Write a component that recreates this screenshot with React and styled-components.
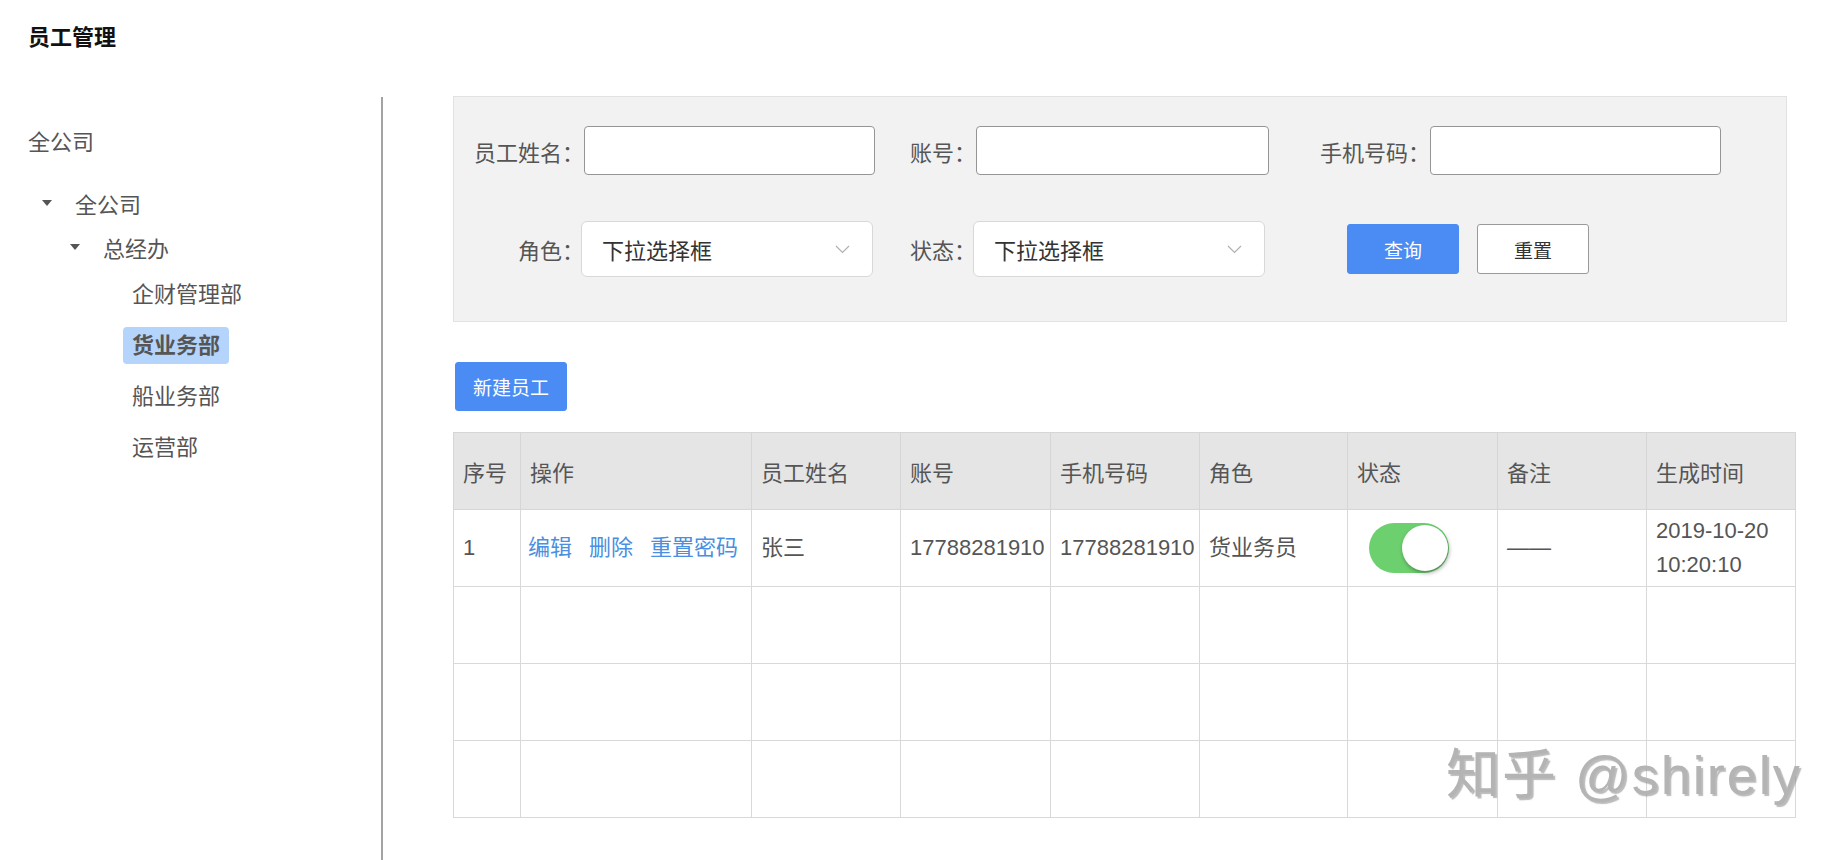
import React from 'react'
import styled, { createGlobalStyle } from 'styled-components'

const GlobalStyle = createGlobalStyle`
  body {
    margin: 0;
    background: #fff;
    font-family: "Liberation Sans", "Noto Sans CJK SC", sans-serif;
    color: #555;
  }
`

const Page = styled.div`
  position: relative;
  width: 1842px;
  height: 860px;
  overflow: hidden;
`

const Header = styled.div`
  height: 96px;
  box-sizing: border-box;
  padding: 26px 0 0 28px;
  font-size: 22px;
  line-height: 24px;
  font-weight: 700;
  color: #111;
`

const Body = styled.div`
  display: flex;
  height: 764px;
`

const Sidebar = styled.aside`
  width: 383px;
  flex-shrink: 0;
  margin-top: 1px;
  border-right: 2px solid #a3a3a3;
  padding-left: 28px;
  box-sizing: border-box;
  font-size: 22px;
`

const RootLabel = styled.div`
  padding-top: 31px;
  line-height: 30px;
  height: 53px;
  color: #555;
`

const TreeRow = styled.div`
  display: flex;
  align-items: center;
  height: ${p => p.$h}px;
  padding-left: ${p => p.$indent}px;
  color: #555;
`

const Caret = styled.span`
  width: 0;
  height: 0;
  border-left: 5px solid transparent;
  border-right: 5px solid transparent;
  border-top: 6px solid #555;
  margin-right: 23px;
`

const Leaf = styled.span`
  padding: 3px 9px;
  line-height: 31px;
  border-radius: 4px;
  background: ${p => (p.$active ? '#b5d4fb' : 'transparent')};
  font-weight: ${p => (p.$active ? 700 : 400)};
`

const Main = styled.main`
  flex: 1;
  padding-left: 70px;
`

const FilterPanel = styled.div`
  width: 1334px;
  height: 226px;
  box-sizing: border-box;
  background: #f2f2f2;
  border: 1px solid #e2e2e2;
  padding-top: 29px;
  display: grid;
  grid-template-columns: 130px 291px 101px 293px 161px 291px;
  grid-template-rows: 49px 56px;
  row-gap: 46px;
  align-items: center;
`

const Label = styled.label`
  text-align: right;
  font-size: 22px;
  color: #555;
  white-space: nowrap;
`

const TextInput = styled.input`
  box-sizing: border-box;
  width: 100%;
  height: 49px;
  border: 1px solid #959595;
  border-radius: 4px;
  background: #fff;
  outline: none;
`

const SelectBox = styled.div`
  box-sizing: border-box;
  width: 292px;
  margin-left: -3px;
  height: 56px;
  border: 1px solid #d8d8d8;
  border-radius: 6px;
  background: #fff;
  display: flex;
  align-items: center;
  justify-content: space-between;
  padding: 0 22px 0 20px;
  font-size: 22px;
  color: #333;
`

const ButtonCell = styled.div`
  grid-column: 5 / span 2;
  display: flex;
  gap: 18px;
  padding-left: 78px;
`

const Button = styled.button`
  width: 112px;
  height: ${p => p.$h || 50}px;
  box-sizing: border-box;
  border-radius: 3px;
  font-family: inherit;
  font-size: 19px;
  cursor: pointer;
  border: 1px solid ${p => (p.$primary ? '#4a8cf3' : '#9a9a9a')};
  background: ${p => (p.$primary ? '#4a8cf3' : '#fff')};
  color: ${p => (p.$primary ? '#fff' : '#333')};
`

const Toolbar = styled.div`
  padding: 40px 0 21px 2px;
`

const Table = styled.table`
  border-collapse: collapse;
  table-layout: fixed;
  width: 1342px;
  font-size: 22px;
  color: #555;
  border: 1px solid #cfcfcf;
`

const Th = styled.th`
  height: 76px;
  background: #e5e5e5;
  font-weight: 400;
  text-align: left;
  padding: 0 9px;
  border: 1px solid #d6d6d6;
`

const Td = styled.td`
  height: 76px;
  padding: 0 9px;
  border: 1px solid #d9d9d9;
  white-space: nowrap;
  line-height: 34px;
`

const Link = styled.a`
  color: #4a8fe0;
  margin-right: 17px;
  text-decoration: none;
  &:first-child { margin-left: -2px; }
  &:last-child { margin-right: 0; }
`

const Toggle = styled.div`
  width: 80px;
  height: 50px;
  margin-left: 12px;
  border-radius: 25px;
  background: #6dd06f;
  display: flex;
  align-items: center;
  justify-content: flex-end;
  padding: 0 1px;
  box-sizing: border-box;
`

const Knob = styled.div`
  width: 46px;
  height: 46px;
  border-radius: 50%;
  background: #fff;
  box-shadow: 1px 2px 4px rgba(0, 0, 0, 0.35);
`

const Watermark = styled.div`
  position: absolute;
  left: 1446px;
  top: 740px;
  font-size: 54px;
  line-height: 70px;
  letter-spacing: 2px;
  color: #b4b4b4;
  text-shadow: 2px 2px 1px rgba(120, 120, 120, 0.5);
  white-space: nowrap;
  pointer-events: none;
`

const Chevron = () => (
  <svg width="15" height="9" viewBox="0 0 15 9" fill="none">
    <path d="M1 1l6.5 6.5L14 1" stroke="#b0b0b0" strokeWidth="1.2" />
  </svg>
)

const columns = [67, 231, 149, 150, 149, 148, 150, 149, 149]
const heads = ['序号', '操作', '员工姓名', '账号', '手机号码', '角色', '状态', '备注', '生成时间']

export default function App() {
  return (
    <Page>
      <GlobalStyle />
      <Header>员工管理</Header>
      <Body>
        <Sidebar>
          <RootLabel>全公司</RootLabel>
          <TreeRow $h={44} $indent={14}><Caret />全公司</TreeRow>
          <TreeRow $h={44} $indent={42}><Caret />总经办</TreeRow>
          <TreeRow $h={51} $indent={95}><Leaf>企财管理部</Leaf></TreeRow>
          <TreeRow $h={51} $indent={95}><Leaf $active>货业务部</Leaf></TreeRow>
          <TreeRow $h={51} $indent={95}><Leaf>船业务部</Leaf></TreeRow>
          <TreeRow $h={51} $indent={95}><Leaf>运营部</Leaf></TreeRow>
        </Sidebar>
        <Main>
          <FilterPanel>
            <Label>员工姓名：</Label>
            <TextInput />
            <Label>账号：</Label>
            <TextInput />
            <Label>手机号码：</Label>
            <TextInput />
            <Label>角色：</Label>
            <SelectBox>下拉选择框<Chevron /></SelectBox>
            <Label>状态：</Label>
            <SelectBox>下拉选择框<Chevron /></SelectBox>
            <ButtonCell>
              <Button $primary>查询</Button>
              <Button>重置</Button>
            </ButtonCell>
          </FilterPanel>
          <Toolbar>
            <Button $primary $h={49}>新建员工</Button>
          </Toolbar>
          <Table>
            <colgroup>
              {columns.map((w, i) => <col key={i} style={{ width: w }} />)}
            </colgroup>
            <thead>
              <tr>{heads.map(h => <Th key={h}>{h}</Th>)}</tr>
            </thead>
            <tbody>
              <tr>
                <Td>1</Td>
                <Td>
                  <Link>编辑</Link>
                  <Link>删除</Link>
                  <Link>重置密码</Link>
                </Td>
                <Td>张三</Td>
                <Td>17788281910</Td>
                <Td>17788281910</Td>
                <Td>货业务员</Td>
                <Td><Toggle><Knob /></Toggle></Td>
                <Td>——</Td>
                <Td>2019-10-20<br />10:20:10</Td>
              </tr>
              {[0, 1, 2].map(r => (
                <tr key={r}>{columns.map((_, i) => <Td key={i} />)}</tr>
              ))}
            </tbody>
          </Table>
        </Main>
      </Body>
      <Watermark>知乎 @shirely</Watermark>
    </Page>
  )
}
